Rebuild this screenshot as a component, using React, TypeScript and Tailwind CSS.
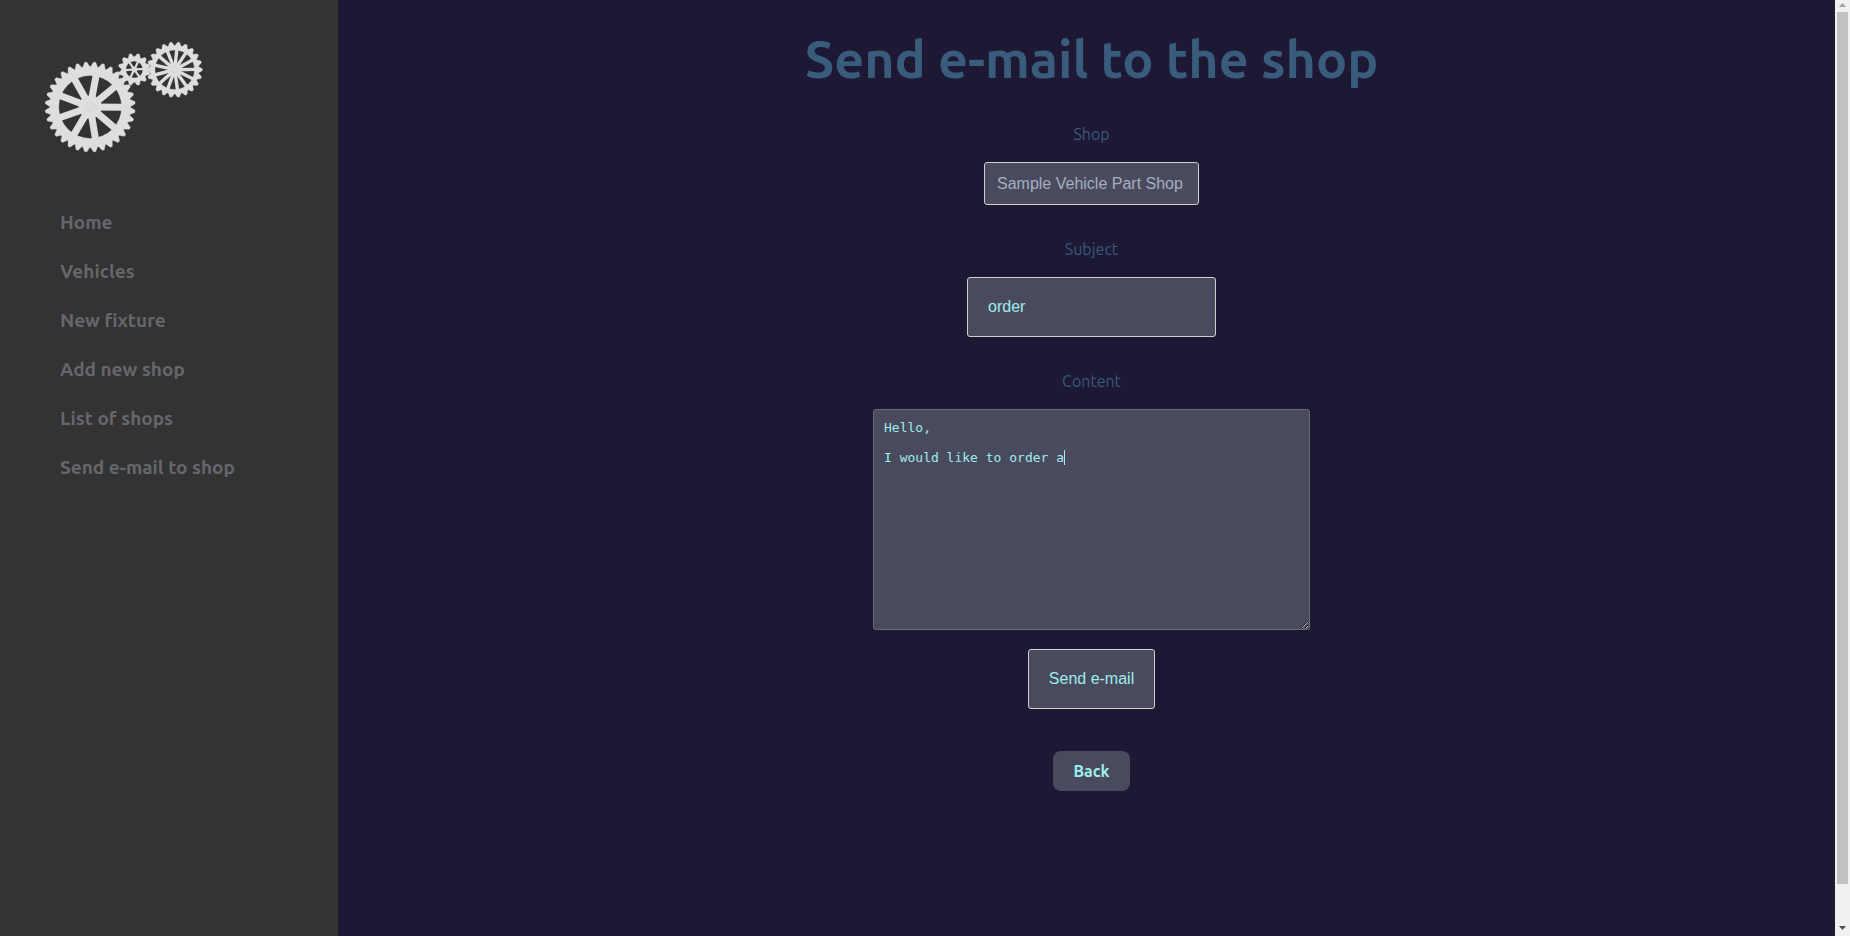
const MENU = ['Home', 'Vehicles', 'New fixture', 'Add new shop', 'List of shops', 'Send e-mail to shop'];

type GearProps = {
  cx: number;
  cy: number;
  outer: number;
  valley: number;
  inner: number;
  hub: number;
  teeth: number;
  spokes: number;
  spokeStart: number;
  spokeWidth: number;
  pin: number;
};

function Gear({ cx, cy, outer, valley, inner, hub, teeth, spokes, spokeStart, spokeWidth, pin }: GearProps) {
  const at = (r: number, turn: number) => {
    const a = turn * 2 * Math.PI;
    return `${(cx + r * Math.sin(a)).toFixed(2)},${(cy - r * Math.cos(a)).toFixed(2)}`;
  };
  const rim = Array.from({ length: teeth }, (_, i) =>
    [
      at(valley, (i + 0.06) / teeth),
      at(outer, (i + 0.38) / teeth),
      at(outer, (i + 0.62) / teeth),
      at(valley, (i + 0.94) / teeth),
    ].join(' '),
  ).join(' L');
  const hole = `M${cx - inner},${cy} a${inner},${inner} 0 1 0 ${inner * 2},0 a${inner},${inner} 0 1 0 ${-inner * 2},0 Z`;
  return (
    <g>
      <path d={`M${rim} Z ${hole}`} fill="#dedede" fillRule="evenodd" stroke="#dedede" strokeWidth="0.4" strokeLinejoin="round" />
      {Array.from({ length: spokes }, (_, i) => (
        <path
          key={i}
          d={`M${at(0, 0)} L${at(inner + 1, spokeStart / 360 + i / spokes)}`}
          stroke="#dedede"
          strokeWidth={spokeWidth}
        />
      ))}
      <circle cx={cx} cy={cy} r={hub} fill="#dedede" />
      <circle cx={cx} cy={cy} r={pin} fill="none" stroke="#d2d2d2" strokeWidth="0.8" />
    </g>
  );
}

function Logo() {
  return (
    <svg viewBox="0 0 160 114" className="block h-[114px] w-40" role="img" aria-label="Gears">
      <Gear cx={46.2} cy={67} outer={45} valley={40.4} inner={31.5} hub={11.5} teeth={32} spokes={9} spokeStart={10.6} spokeWidth={7} pin={4.8} />
      <Gear cx={90.3} cy={29.5} outer={16} valley={12.8} inner={8.6} hub={2.8} teeth={12} spokes={6} spokeStart={26} spokeWidth={2.2} pin={1.2} />
      <Gear cx={130.7} cy={29.7} outer={27.6} valley={24.2} inner={19.8} hub={6.5} teeth={22} spokes={13} spokeStart={6} spokeWidth={3.4} pin={2.8} />
    </svg>
  );
}

function Scrollbar() {
  return (
    <div aria-hidden="true" className="flex w-[15px] shrink-0 flex-col items-center bg-[#f1f1f1]">
      <svg viewBox="0 0 15 12" className="h-3 w-[15px] shrink-0">
        <path d="M4 7 L7.5 3 L11 7 Z" fill="#a3a3a3" />
      </svg>
      <div className="w-[11px] grow bg-[#c1c1c1]" />
      <div className="h-9 shrink-0" />
      <svg viewBox="0 0 15 16" className="h-4 w-[15px] shrink-0">
        <path d="M4 6 L11 6 L7.5 10 Z" fill="#505050" />
      </svg>
    </div>
  );
}

const LABEL = 'mt-8 mb-4 text-base leading-6 text-[#385a7a]';

export default function App() {
  return (
    <div className="flex min-h-screen bg-[#1d1833] font-['Ubuntu','Open_Sans',sans-serif]">
      <aside className="w-[338px] shrink-0 bg-[#333333] pt-10">
        <a href="#" className="ml-11 block w-40">
          <Logo />
        </a>
        <nav className="mt-11 pl-[60px]">
          <ul>
            {MENU.map((item) => (
              <li key={item}>
                <a href="#" className="block text-[19px] leading-[49px] font-bold text-[#66666c]">
                  {item}
                </a>
              </li>
            ))}
          </ul>
        </nav>
      </aside>

      <main className="flex grow flex-col items-center pt-7 pl-[10px]">
        <h1 className="text-center text-[52px] leading-[62px] font-bold text-[#3a5c7c]">Send e-mail to the shop</h1>
        <form className="flex flex-col items-center" onSubmit={(e) => e.preventDefault()}>
          <label htmlFor="shop" className={LABEL}>
            Shop
          </label>
          <select
            id="shop"
            disabled
            className="h-[43px] w-[215px] appearance-none rounded-[3px] border border-[#d0d0d0] bg-[#4a4a5e] px-3 font-['Liberation_Sans',Arial,sans-serif] text-base text-[#a3afbf] opacity-100"
          >
            <option>Sample Vehicle Part Shop</option>
          </select>
          <label htmlFor="subject" className={LABEL}>
            Subject
          </label>
          <input
            id="subject"
            type="text"
            defaultValue="order"
            className="h-[60px] w-[249px] rounded-[3px] border border-[#d0d0d0] bg-[#4a4a5e] px-5 font-['Liberation_Sans',Arial,sans-serif] text-base text-[#9eeeea]"
          />
          <label htmlFor="content" className={LABEL}>
            Content
          </label>
          <div className="relative">
            <textarea
              id="content"
              defaultValue={'Hello,\n\nI would like to order a'}
              spellCheck={false}
              className="block h-[221px] w-[437px] rounded-[3px] border border-[#6a6a6e] bg-[#4a4a5e] p-[10px] font-['DejaVu_Sans_Mono',monospace] text-[13px] leading-[15px] text-[#9eeeea] outline-none"
            />
            <span aria-hidden="true" className="absolute top-[41px] left-[191px] h-[15px] w-px bg-[#9eeeea]" />
          </div>
          <button
            type="submit"
            className="mt-[19px] h-[60px] rounded-[3px] border border-[#d0d0d0] bg-[#4a4a5e] px-5 font-['Liberation_Sans',Arial,sans-serif] text-base text-[#9eeeea]"
          >
            Send e-mail
          </button>
        </form>
        <a href="#" className="mt-[42px] rounded-lg bg-[#4a4a5e] px-5 py-2 text-base leading-6 font-bold text-[#9eeeea]">
          Back
        </a>
      </main>

      <Scrollbar />
    </div>
  );
}
